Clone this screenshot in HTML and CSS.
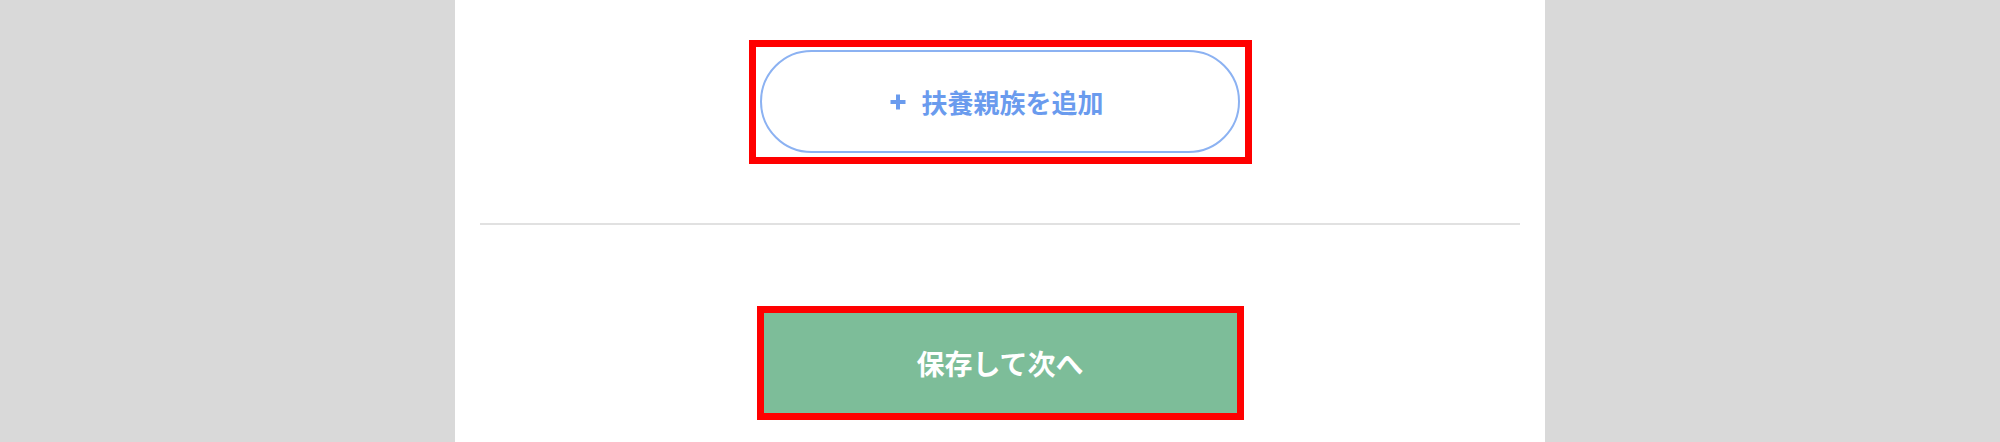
FILE: index.html
```html
<!DOCTYPE html>
<html>
<head>
<meta charset="UTF-8">
<title>扶養親族</title>
<link rel="stylesheet" href="styles.css">
</head>
<body>
	<div class="panel">
		<div class="row">
			<span class="mark mark-pill">
				<button type="button" class="btn-add">
					<svg class="plus" viewBox="0 0 18 18" width="18" height="18"><path d="M9 1.5v15M1.5 9h15" stroke="currentColor" stroke-width="4" fill="none"/></svg>
					扶養親族を追加
				</button>
			</span>
		</div>

		<hr class="divider">

		<div class="row">
			<span class="mark">
				<button type="submit" class="btn-next">保存して次へ</button>
			</span>
		</div>
	</div>
</body>
</html>
```

FILE: styles.css
```css
html, body {
	margin: 0;
	height: 100%;
}

body {
	background: #d9d9d9;
	font-family: "Noto Sans CJK JP", "Liberation Sans", sans-serif;
}

.panel {
	width: 1090px;
	height: 442px;
	margin: 0 auto;
	background: #ffffff;
	padding: 40px 25px 0;
	box-sizing: border-box;
}

.row {
	display: flex;
	justify-content: center;
}

/* red highlight frame around the buttons */
.mark {
	display: block;
	border: 7px solid #ff0000;
}

.mark-pill {
	padding: 3px 5px 4px 4px;
}

.btn-add {
	display: flex;
	align-items: center;
	justify-content: center;
	width: 480px;
	height: 103px;
	border: 2px solid #8cb2f2;
	border-radius: 52px;
	background: #ffffff;
	color: #6a9bee;
	font-family: inherit;
	font-size: 26px;
	font-weight: bold;
	padding: 0 6px 0 0;
}

.plus {
	margin-right: 14px;
}

.divider {
	border: 0;
	height: 2px;
	background: #e1e1e1;
	margin: 59px 0 81px;
}

.btn-next {
	display: block;
	width: 473px;
	height: 100px;
	border: 0;
	background: #7dbd99;
	color: #ffffff;
	font-family: inherit;
	font-size: 28px;
	font-weight: bold;
	padding: 0;
}
```
